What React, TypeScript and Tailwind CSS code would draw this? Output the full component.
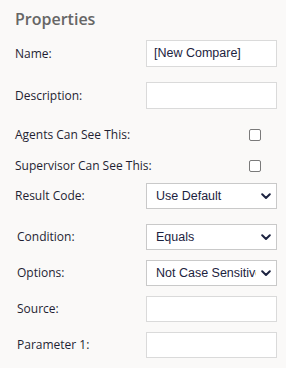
const Chevron = () => (
  <svg width="10" height="7" viewBox="0 0 10 7" className="shrink-0">
    <path d="M1.2 1.3 L5 5 L8.8 1.3" fill="none" stroke="#1c2340" strokeWidth="2" strokeLinecap="round" strokeLinejoin="round" />
  </svg>
);

function Row({ label, indent, className, children }: { label: string; indent?: boolean; className: string; children?: React.ReactNode }) {
  return (
    <div className={`flex items-center ${className}`}>
      <div className={`w-[146px] shrink-0 whitespace-nowrap text-[12px] text-[#1f1f33] ${indent ? "pl-[17px]" : "pl-[15px]"}`}>
        {label}
      </div>
      {children}
    </div>
  );
}

function TextBox({ value }: { value?: string }) {
  return (
    <div className="flex h-full w-[131px] items-center border border-[#dadada] bg-white pl-[7px] text-[12.5px] text-[#1c2340] [font-family:'Liberation_Sans',Arial,sans-serif]">
      {value}
    </div>
  );
}

function Select({ value }: { value: string }) {
  return (
    <div className="flex h-full w-[131px] items-center justify-between border border-[#c9c9c9] bg-white pl-[9px] pr-[5px] text-[12.5px] text-[#1c2340] [font-family:'Liberation_Sans',Arial,sans-serif]">
      <span className="w-[100px] overflow-hidden whitespace-nowrap">{value}</span>
      <Chevron />
    </div>
  );
}

function Check() {
  return <span className="ml-[103px] block h-[12px] w-[12px] rounded-[2px] border border-[#7a7a7a] bg-white" />;
}

export default function App() {
  return (
    <div className="h-[368px] w-[286px] bg-[#faf9f8] [font-family:'Open_Sans',sans-serif]">
      <div className="flex h-[40px] items-start pl-[15px] pt-[7px] text-[16px] font-semibold text-[#666666]">
        Properties
      </div>
      <Row label="Name:" className="h-[27px]">
        <TextBox value="[New Compare]" />
      </Row>
      <Row label="Description:" className="mt-[15px] h-[27px]">
        <TextBox />
      </Row>
      <Row label="Agents Can See This:" className="mt-[11px] h-[30px]">
        <Check />
      </Row>
      <Row label="Supervisor Can See This:" className="h-[31px]">
        <Check />
      </Row>
      <Row label="Result Code:" className="mt-[2px] h-[26px]">
        <Select value="Use Default" />
      </Row>
      <Row label="Condition:" indent className="mt-[15px] h-[26px]">
        <Select value="Equals" />
      </Row>
      <Row label="Options:" indent className="mt-[10px] h-[26px]">
        <Select value="Not Case Sensitive" />
      </Row>
      <Row label="Source:" indent className="mt-[10px] h-[26px]">
        <TextBox />
      </Row>
      <Row label="Parameter 1:" indent className="mt-[10px] h-[26px]">
        <TextBox />
      </Row>
    </div>
  );
}
